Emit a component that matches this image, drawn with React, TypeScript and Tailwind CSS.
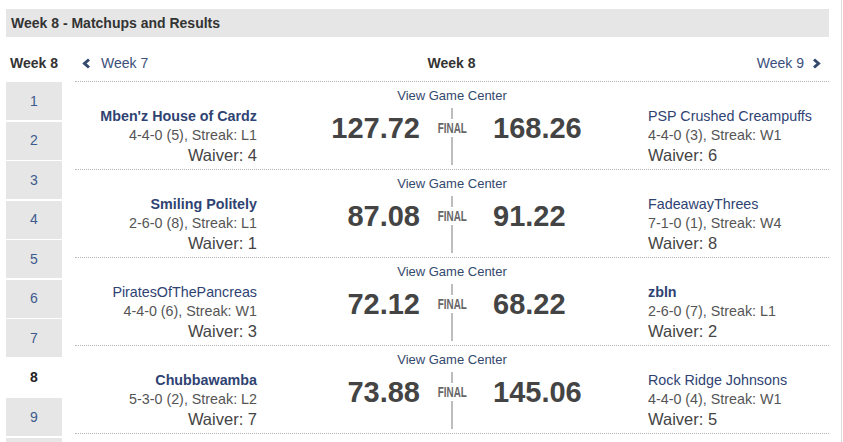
const matchups = [
  {
    home: { name: "Mben'z House of Cardz", record: "4-4-0 (5), Streak: L1", waiver: 4, bold: true },
    homeScore: "127.72",
    away: { name: "PSP Crushed Creampuffs", record: "4-4-0 (3), Streak: W1", waiver: 6, bold: false },
    awayScore: "168.26",
  },
  {
    home: { name: "Smiling Politely", record: "2-6-0 (8), Streak: L1", waiver: 1, bold: true },
    homeScore: "87.08",
    away: { name: "FadeawayThrees", record: "7-1-0 (1), Streak: W4", waiver: 8, bold: false },
    awayScore: "91.22",
  },
  {
    home: { name: "PiratesOfThePancreas", record: "4-4-0 (6), Streak: W1", waiver: 3, bold: false },
    homeScore: "72.12",
    away: { name: "zbln", record: "2-6-0 (7), Streak: L1", waiver: 2, bold: true },
    awayScore: "68.22",
  },
  {
    home: { name: "Chubbawamba", record: "5-3-0 (2), Streak: L2", waiver: 7, bold: true },
    homeScore: "73.88",
    away: { name: "Rock Ridge Johnsons", record: "4-4-0 (4), Streak: W1", waiver: 5, bold: false },
    awayScore: "145.06",
  },
];

// 10th box is cut off by the window edge
const weeks = [1, 2, 3, 4, 5, 6, 7, 8, 9, 0];

type Team = { name: string; record: string; waiver: number; bold: boolean };

function TeamInfo({ team, align }: { team: Team; align: "left" | "right" }) {
  return (
    <div className={`pt-[4px] ${align === "right" ? "text-right" : "text-left"}`}>
      <div className={`text-[14.3px] leading-[16px] text-[#2f4373] ${team.bold ? "font-bold" : ""}`}>
        {team.name}
      </div>
      <div className="mt-[3px] text-[14.3px] leading-[16px] text-[#555]">{team.record}</div>
      <div className="mt-[3px] text-[16.5px] leading-[18px] text-[#444]">Waiver: {team.waiver}</div>
    </div>
  );
}

function Chevron({ dir }: { dir: "left" | "right" }) {
  return (
    <svg width="9" height="11" viewBox="0 0 9 11" className="shrink-0">
      <polyline
        points={dir === "left" ? "7,1.5 2.5,5.5 7,9.5" : "2,1.5 6.5,5.5 2,9.5"}
        fill="none"
        stroke="#34496e"
        strokeWidth="3"
      />
    </svg>
  );
}

export default function App() {
  return (
    <div className="w-[843px] h-[442px] overflow-hidden bg-white font-['Liberation_Sans',Arial,sans-serif]">
      <div className="w-[842px] h-[442px] border-r border-[#dcdcdc] pt-[9px]">
        <div className="ml-[6px] w-[823px] h-[28px] bg-[#e6e6e6] px-[5px] flex items-center text-[14px] font-bold text-[#333]">
          Week 8 - Matchups and Results
        </div>

        <div className="flex mt-[8px] pl-[6px]">
          <div className="w-[56px] shrink-0">
            <div className="h-[37px] flex items-center pl-[4px] text-[14px] font-bold text-[#333]">Week 8</div>
            <div className="flex flex-col gap-[1.5px]">
              {weeks.map((w) =>
                w === 8 ? (
                  <div key={w} className="h-[38px] flex items-center justify-center text-[14px] font-bold text-[#222]">
                    {w}
                  </div>
                ) : (
                  <div
                    key={w}
                    className="h-[38px] bg-[#e6e6e6] flex items-center justify-center text-[14px] text-[#3d5a8c]"
                  >
                    {w > 0 ? w : ""}
                  </div>
                )
              )}
            </div>
          </div>

          <div className="ml-[13px] w-[754px]">
            <div className="h-[37px] border-b border-dotted border-[#b5b5b5] grid grid-cols-[1fr_auto_1fr] items-center pl-[7px] pr-[8px] text-[14px]">
              <div className="flex items-center gap-[10px] text-[#3b4f7a]">
                <Chevron dir="left" />
                Week 7
              </div>
              <div className="font-bold text-[#333]">Week 8</div>
              <div className="flex items-center justify-end gap-[8px] text-[#3b4f7a]">
                Week 9
                <Chevron dir="right" />
              </div>
            </div>

            {matchups.map((m, i) => (
              <div key={i} className="h-[88px] border-b border-dotted border-[#b5b5b5]">
                <div className="pt-[6px] text-center text-[13px] leading-[16px] text-[#34496e]">View Game Center</div>
                <div className="flex">
                  <div className="w-[182px]">
                    <TeamInfo team={m.home} align="right" />
                  </div>
                  <div className="w-[163px] text-right">
                    <div className="mt-[8px] text-[29px] leading-[32px] font-bold text-[#444]">{m.homeScore}</div>
                  </div>
                  <div className="w-[64px] flex flex-col items-center pt-[4px]">
                    <div className="w-[2px] h-[11px] bg-[#bdbdbd]" />
                    <div className="h-[18px] flex items-center justify-center">
                      <span className="inline-block scale-x-[0.68] text-[14.5px] font-bold text-[#666] leading-none">
                        FINAL
                      </span>
                    </div>
                    <div className="w-[2px] h-[28px] bg-[#bdbdbd]" />
                  </div>
                  <div className="w-[164px] pl-[9px]">
                    <div className="mt-[8px] text-[29px] leading-[32px] font-bold text-[#444]">{m.awayScore}</div>
                  </div>
                  <div className="flex-1">
                    <TeamInfo team={m.away} align="left" />
                  </div>
                </div>
              </div>
            ))}
          </div>
        </div>
      </div>
    </div>
  );
}
